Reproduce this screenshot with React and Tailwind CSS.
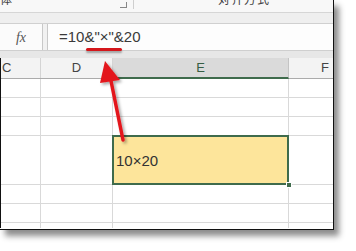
import React from 'react'

const sans = { fontFamily: '"Liberation Sans", Arial, sans-serif' }

function Row({ h, children }) {
  return (
    <div className="flex border-b border-[#d9d9d9]" style={{ height: h }}>
      {children}
    </div>
  )
}

function Cells({ h }) {
  return (
    <Row h={h}>
      <div className="w-[40px] border-r border-[#d9d9d9]" />
      <div className="w-[72px] border-r border-[#d9d9d9]" />
      <div className="w-[176px] border-r border-[#d9d9d9]" />
      <div className="flex-1" />
    </Row>
  )
}

export default function App() {
  return (
    <div className="w-[356px] h-[251px] bg-white overflow-hidden" style={sans}>
      <div className="relative w-[334px] h-[230px] bg-white border-r border-b border-[#111] shadow-[5px_6px_6px_rgba(0,0,0,0.45)]">
        {/* ribbon remnant */}
        <div className="h-[12px] flex bg-[#f8f8f8] overflow-hidden text-[#444]">
          <span className="w-[120px] text-[12px] leading-[12px] -translate-y-[7px]" style={{ fontFamily: '"Noto Sans CJK SC", sans-serif' }}>体</span>
          <div className="w-[7px] h-[6px] mt-[2px] border border-[#888] border-t-0 border-l-0" />
          <div className="w-px h-[9px] ml-[6px] bg-[#cfcfcf]" />
          <span className="ml-[84px] text-[12px] leading-[12px] -translate-y-[7px] tracking-[1px]" style={{ fontFamily: '"Noto Sans CJK SC", sans-serif' }}>对齐方式</span>
        </div>
        <div className="h-[11px] bg-[#efefef] border-t border-[#d6d6d6]" />
        {/* formula bar */}
        <div className="h-[27px] flex bg-[#f1f1f1] border-t border-[#d0d0d0]">
          <div className="w-[43px] bg-[#fbfbfb] border-r border-[#c8c8c8] flex items-center justify-center">
            <span className="italic text-[14px] text-[#555]" style={{ fontFamily: '"Liberation Serif", serif' }}>fx</span>
          </div>
          <div className="ml-[4px] flex-1 bg-[#fdfdfd] border-l border-[#c8c8c8] flex items-center pl-[11px]">
            <span className="text-[15px] text-[#3a3a3a]">=10&amp;"×"&amp;20</span>
          </div>
        </div>
        <div className="h-[8px] bg-[#e7e7e7] border-t border-[#cfcfcf]" />
        {/* column header */}
        <div className="border-l border-[#111]">
          <div className="h-[21px] flex bg-[#f3f3f3] border-b border-[#ababab] text-[13px] text-[#444]">
            <div className="w-[40px] border-r border-[#d4d4d4] flex items-center pl-[1px]">C</div>
            <div className="w-[72px] border-r border-[#d4d4d4] flex items-center justify-center">D</div>
            <div className="w-[176px] bg-[#dadada] border-r border-[#c4c4c4] border-b-2 border-b-[#3f6b4c] -mb-px flex items-center justify-center text-[#365e44]">E</div>
            <div className="flex-1 flex items-center justify-end pr-[4px]">F</div>
          </div>
          <Cells h={19} />
          <Cells h={19} />
          <Cells h={19} />
          <Row h={49}>
            <div className="w-[40px] border-r border-[#d9d9d9]" />
            <div className="w-[72px] border-r border-[#d9d9d9]" />
            <div className="relative w-[176px] border-r border-[#d9d9d9] bg-[#fde59b] flex items-center pl-[3px] pt-[3px]">
              <span className="text-[15px] text-[#333]">10×20</span>
              <div className="absolute -inset-x-px -top-px -bottom-px border-2 border-[#3f6b4c]" />
              <div className="absolute -right-[4px] -bottom-[4px] w-[6px] h-[6px] bg-[#3f6b4c] border border-white" />
            </div>
            <div className="flex-1" />
          </Row>
          <Cells h={19} />
          <Cells h={19} />
          <div className="h-[5px] flex">
            <div className="w-[40px] border-r border-[#d9d9d9]" />
            <div className="w-[72px] border-r border-[#d9d9d9]" />
            <div className="w-[176px] border-r border-[#d9d9d9]" />
          </div>
        </div>
        {/* red underline */}
        <div className="absolute left-[86px] top-[48px] w-[36px] h-[3px] bg-[#d4161b] rounded-sm shadow-[0_2px_2px_rgba(0,0,0,0.3)]" />
        {/* red arrow */}
        <svg className="absolute left-0 top-0 pointer-events-none" width="334" height="230">
          <defs>
            <filter id="ds" x="-50%" y="-50%" width="200%" height="200%">
              <feDropShadow dx="2" dy="2" stdDeviation="1.5" floodColor="#000" floodOpacity="0.35" />
            </filter>
          </defs>
          <g filter="url(#ds)">
            <line x1="123" y1="140" x2="110" y2="76" stroke="#e3171c" strokeWidth="3.5" strokeLinecap="round" />
            <polygon points="105,61 120,80 100,83" fill="#e3171c" />
          </g>
        </svg>
      </div>
    </div>
  )
}
